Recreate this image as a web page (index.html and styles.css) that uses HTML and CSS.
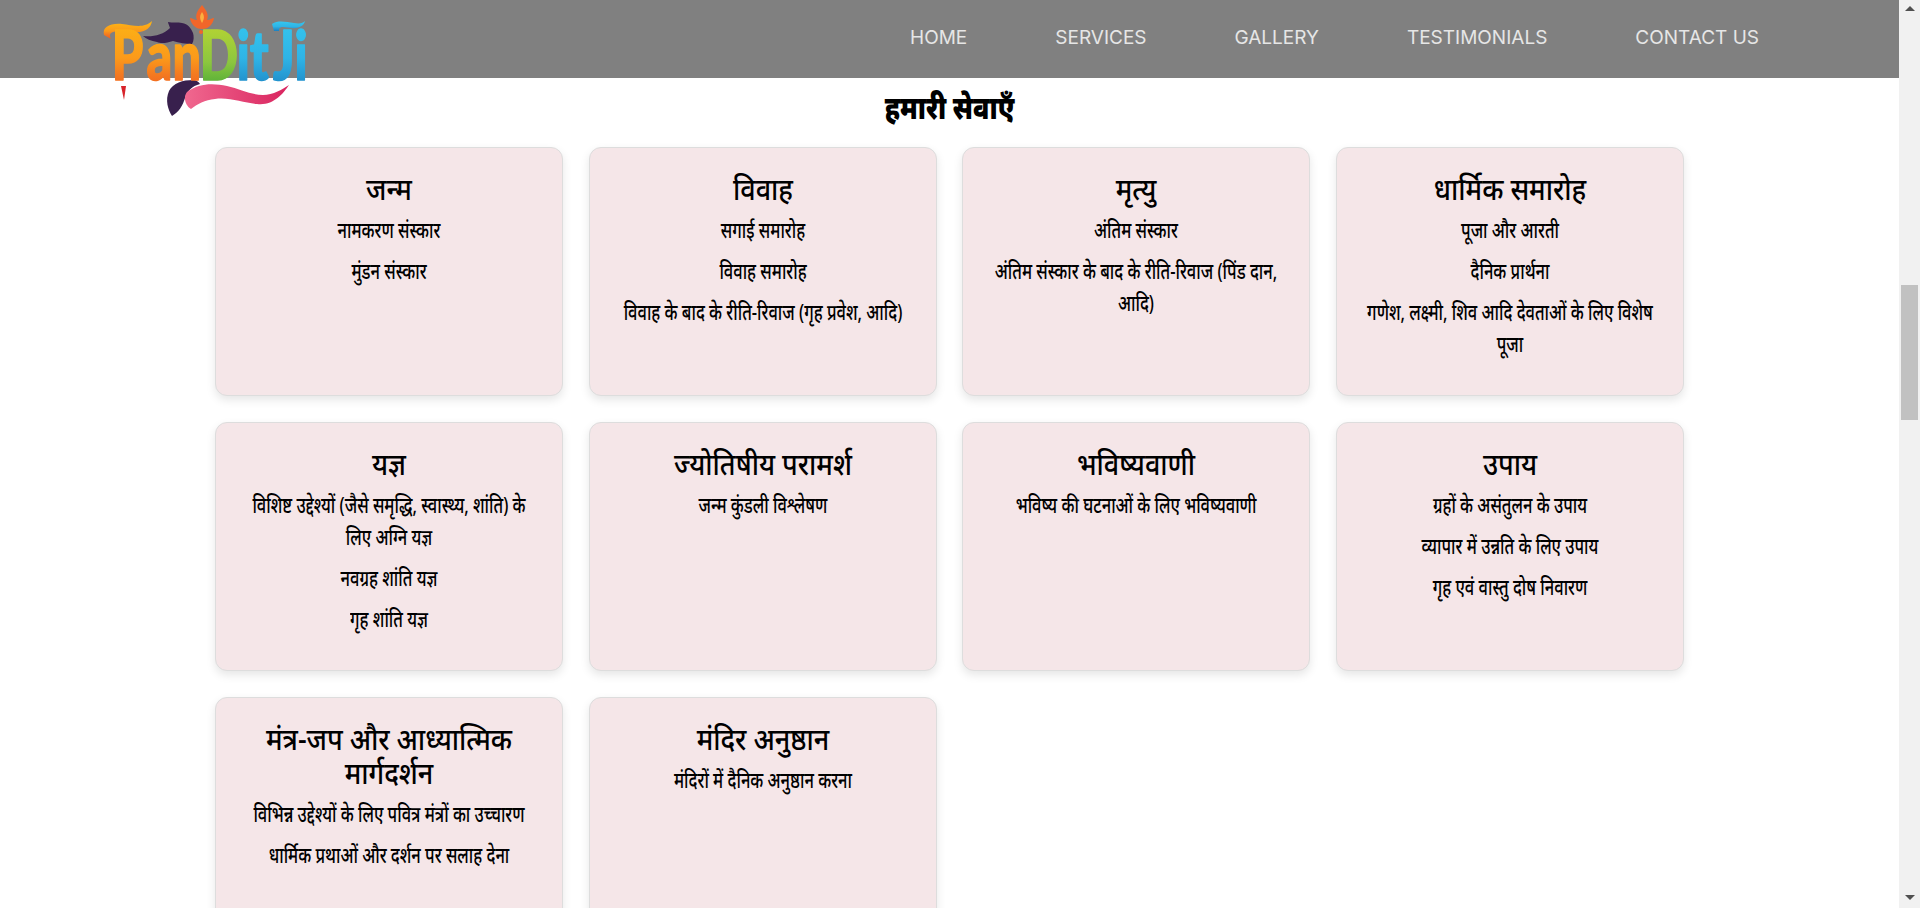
FILE: index.html
```html
<!DOCTYPE html>
<html lang="hi">
<head>
<meta charset="UTF-8">
<meta name="viewport" content="width=device-width, initial-scale=1.0">
<title>PanditJi</title>
<link rel="stylesheet" href="styles.css">
</head>
<body>
<div class="page">
  <header class="topbar">
    <a class="logo" href="#">
      <svg width="212" height="122" viewBox="100 0 212 122">
        <defs>
          <linearGradient id="warm" x1="0" y1="0" x2="0" y2="1">
            <stop offset="0" stop-color="#fdb913"/>
            <stop offset="0.55" stop-color="#fb9a1a"/>
            <stop offset="0.75" stop-color="#f47a20"/>
            <stop offset="1" stop-color="#f15a1f"/>
          </linearGradient>
          <linearGradient id="green" x1="0" y1="0" x2="0" y2="1">
            <stop offset="0" stop-color="#c3d82f"/>
            <stop offset="0.6" stop-color="#8cc63f"/>
            <stop offset="1" stop-color="#3fa535"/>
          </linearGradient>
          <linearGradient id="blue" x1="0" y1="0" x2="0" y2="1">
            <stop offset="0" stop-color="#35c9f0"/>
            <stop offset="0.55" stop-color="#2fb4e6"/>
            <stop offset="1" stop-color="#1b7fc0"/>
          </linearGradient>
          <linearGradient id="pink" x1="0" y1="0" x2="1" y2="0">
            <stop offset="0" stop-color="#f0688f"/>
            <stop offset="1" stop-color="#d9245f"/>
          </linearGradient>
        </defs>
        <path d="M202 5c5 6 7 10 5 15 3 0 5-2 7-2-1 6-5 11-12 11s-11-5-12-11c2 0 4 2 7 2-2-5 0-9 5-15z" fill="#f1662a"/>
        <path d="M202 12c2 3 3 6 0 11-3-5-2-8 0-11z" fill="#fbb040"/>
        <circle cx="201" cy="32" r="2" fill="#f1662a"/>
        <path d="M143 36c10 1 20-1 27-8-1-3-2-5-2-6 4 1 10 0 14 1 6 1 9 5 11 10 1 3 1 8-1 11-6 0-13-1-19-3-6 2-12 3-16 1-6-1-11-3-14-6z" fill="#38204d"/>
        <path d="M172 116c-4-6-7-16-3-25 4-8 14-11 24-11 3 0 6 2 7 4-8 2-13 7-15 14-2 7-6 14-13 18z" fill="#38204d"/>
        <path d="M187 92c12-9 26-9 40-6 13 3 24 9 36 9 10 0 20-6 26-10-6 9-16 21-32 19-14-1-27-7-42-5-10 1-18 5-24 10-6-4-8-12-4-17z" fill="url(#pink)"/>
        <path d="M121 86h5l-2 14z" fill="#d8232a"/>
        <path d="M104 35c-2-8 6-12 18-11 10 1 22 5 30-3-1 7-7 12-18 11-8 0-14-2-21 0-3 1-4 3-2 7z" fill="url(#warm)"/>
        <path d="M272 24c6-4 14-2 22-1 6 1 9 0 11-2-1 5-7 8-14 7l-8-1c-3 0-4 1-4 4h-5z" fill="url(#blue)"/>
        <text class="logo-text" y="80" transform="scale(0.74 1)"><tspan x="151" fill="url(#warm)" stroke="url(#warm)">P</tspan><tspan x="198" fill="url(#warm)" stroke="url(#warm)">a</tspan><tspan x="233" fill="url(#warm)" stroke="url(#warm)">n</tspan><tspan x="270" fill="url(#green)" stroke="url(#green)">D</tspan><tspan x="320" fill="url(#blue)" stroke="url(#blue)">it</tspan><tspan x="369" fill="url(#blue)" stroke="url(#blue)">Ji</tspan></text>
      </svg>
    </a>
    <nav class="menu">
      <a href="#">HOME</a>
      <a href="#">SERVICES</a>
      <a href="#">GALLERY</a>
      <a href="#">TESTIMONIALS</a>
      <a href="#">CONTACT US</a>
    </nav>
  </header>

  <main class="services">
    <h2>हमारी सेवाएँ</h2>
    <div class="grid">
      <div class="card">
        <h3>जन्म</h3>
        <p>नामकरण संस्कार</p>
        <p>मुंडन संस्कार</p>
      </div>
      <div class="card">
        <h3>विवाह</h3>
        <p>सगाई समारोह</p>
        <p>विवाह समारोह</p>
        <p>विवाह के बाद के रीति-रिवाज (गृह प्रवेश, आदि)</p>
      </div>
      <div class="card">
        <h3>मृत्यु</h3>
        <p>अंतिम संस्कार</p>
        <p>अंतिम संस्कार के बाद के रीति-रिवाज (पिंड दान, आदि)</p>
      </div>
      <div class="card">
        <h3>धार्मिक समारोह</h3>
        <p>पूजा और आरती</p>
        <p>दैनिक प्रार्थना</p>
        <p>गणेश, लक्ष्मी, शिव आदि देवताओं के लिए विशेष पूजा</p>
      </div>
      <div class="card">
        <h3>यज्ञ</h3>
        <p>विशिष्ट उद्देश्यों (जैसे समृद्धि, स्वास्थ्य, शांति) के लिए अग्नि यज्ञ</p>
        <p>नवग्रह शांति यज्ञ</p>
        <p>गृह शांति यज्ञ</p>
      </div>
      <div class="card">
        <h3>ज्योतिषीय परामर्श</h3>
        <p>जन्म कुंडली विश्लेषण</p>
      </div>
      <div class="card">
        <h3>भविष्यवाणी</h3>
        <p>भविष्य की घटनाओं के लिए भविष्यवाणी</p>
      </div>
      <div class="card">
        <h3>उपाय</h3>
        <p>ग्रहों के असंतुलन के उपाय</p>
        <p>व्यापार में उन्नति के लिए उपाय</p>
        <p>गृह एवं वास्तु दोष निवारण</p>
      </div>
      <div class="card">
        <h3>मंत्र-जप और आध्यात्मिक मार्गदर्शन</h3>
        <p>विभिन्न उद्देश्यों के लिए पवित्र मंत्रों का उच्चारण</p>
        <p>धार्मिक प्रथाओं और दर्शन पर सलाह देना</p>
      </div>
      <div class="card">
        <h3>मंदिर अनुष्ठान</h3>
        <p>मंदिरों में दैनिक अनुष्ठान करना</p>
      </div>
    </div>
  </main>
</div>
<div class="scrollbar">
  <div class="arrow-up"></div>
  <div class="thumb"></div>
  <div class="arrow-down"></div>
</div>
</body>
</html>
```

FILE: styles.css
```css
html, body {
  height: 100%;
}
body {
  margin: 0;
  display: flex;
  overflow: hidden;
  background: #fff;
  color: #000;
  font-family: "Noto Sans", "Noto Sans CJK SC", sans-serif;
}
.page {
  flex: 1;
  min-width: 0;
  overflow: hidden;
}
.topbar {
  height: 78px;
  background: #808080;
  display: flex;
  justify-content: space-between;
  padding: 0 140px 0 100px;
}
.logo {
  display: block;
  height: 78px;
  position: relative;
  z-index: 2;
}
.menu {
  display: flex;
  align-items: center;
  gap: 88px;
  padding-bottom: 4px;
}
.menu a {
  color: #e6e6e6;
  font-family: Inter, sans-serif;
  font-size: 19px;
  text-decoration: none;
}
.logo-text {
  font-family: Lato, sans-serif;
  font-size: 68px;
  font-weight: 900;
  stroke-width: 1.5;
  stroke-linejoin: round;
}
.services h2 {
  margin: 8px 0 0;
  height: 61px;
  line-height: 42px;
  text-align: center;
  font-size: 32px;
  font-weight: 900;
  transform: scaleX(0.81);
}
.grid {
  display: grid;
  grid-template-columns: repeat(4, 348px);
  column-gap: 25.6px;
  row-gap: 26px;
  margin-left: 215px;
}
.card {
  height: 249px;
  box-sizing: border-box;
  padding: 24px 20px;
  background: #f5e6e8;
  border: 1px solid #ddd;
  border-radius: 12px;
  box-shadow: 0 4px 10px rgba(0, 0, 0, 0.1);
  text-align: center;
}
.card h3 {
  margin: 0 -10px 7px;
  font-size: 30px;
  line-height: 34px;
  font-weight: 500;
  transform: scaleX(0.9);
}
/* the original face is a narrow one, so the text is squeezed */
.card p {
  margin: 0 -47px 9px;
  font-size: 22px;
  line-height: 32px;
  font-weight: 500;
  transform: scaleX(0.75);
}
.scrollbar {
  width: 21px;
  flex: none;
  display: flex;
  flex-direction: column;
  background: #f1f1f1;
}
.arrow-up,
.arrow-down {
  width: 0;
  height: 0;
  margin: 0 auto;
  border-left: 5px solid transparent;
  border-right: 5px solid transparent;
}
.arrow-up {
  margin-top: 6px;
  border-bottom: 5px solid #505050;
}
.arrow-down {
  margin-top: auto;
  margin-bottom: 8px;
  border-top: 5px solid #505050;
}
.thumb {
  height: 135px;
  margin: 274px 2px 0;
  background: #c1c1c1;
}
```
